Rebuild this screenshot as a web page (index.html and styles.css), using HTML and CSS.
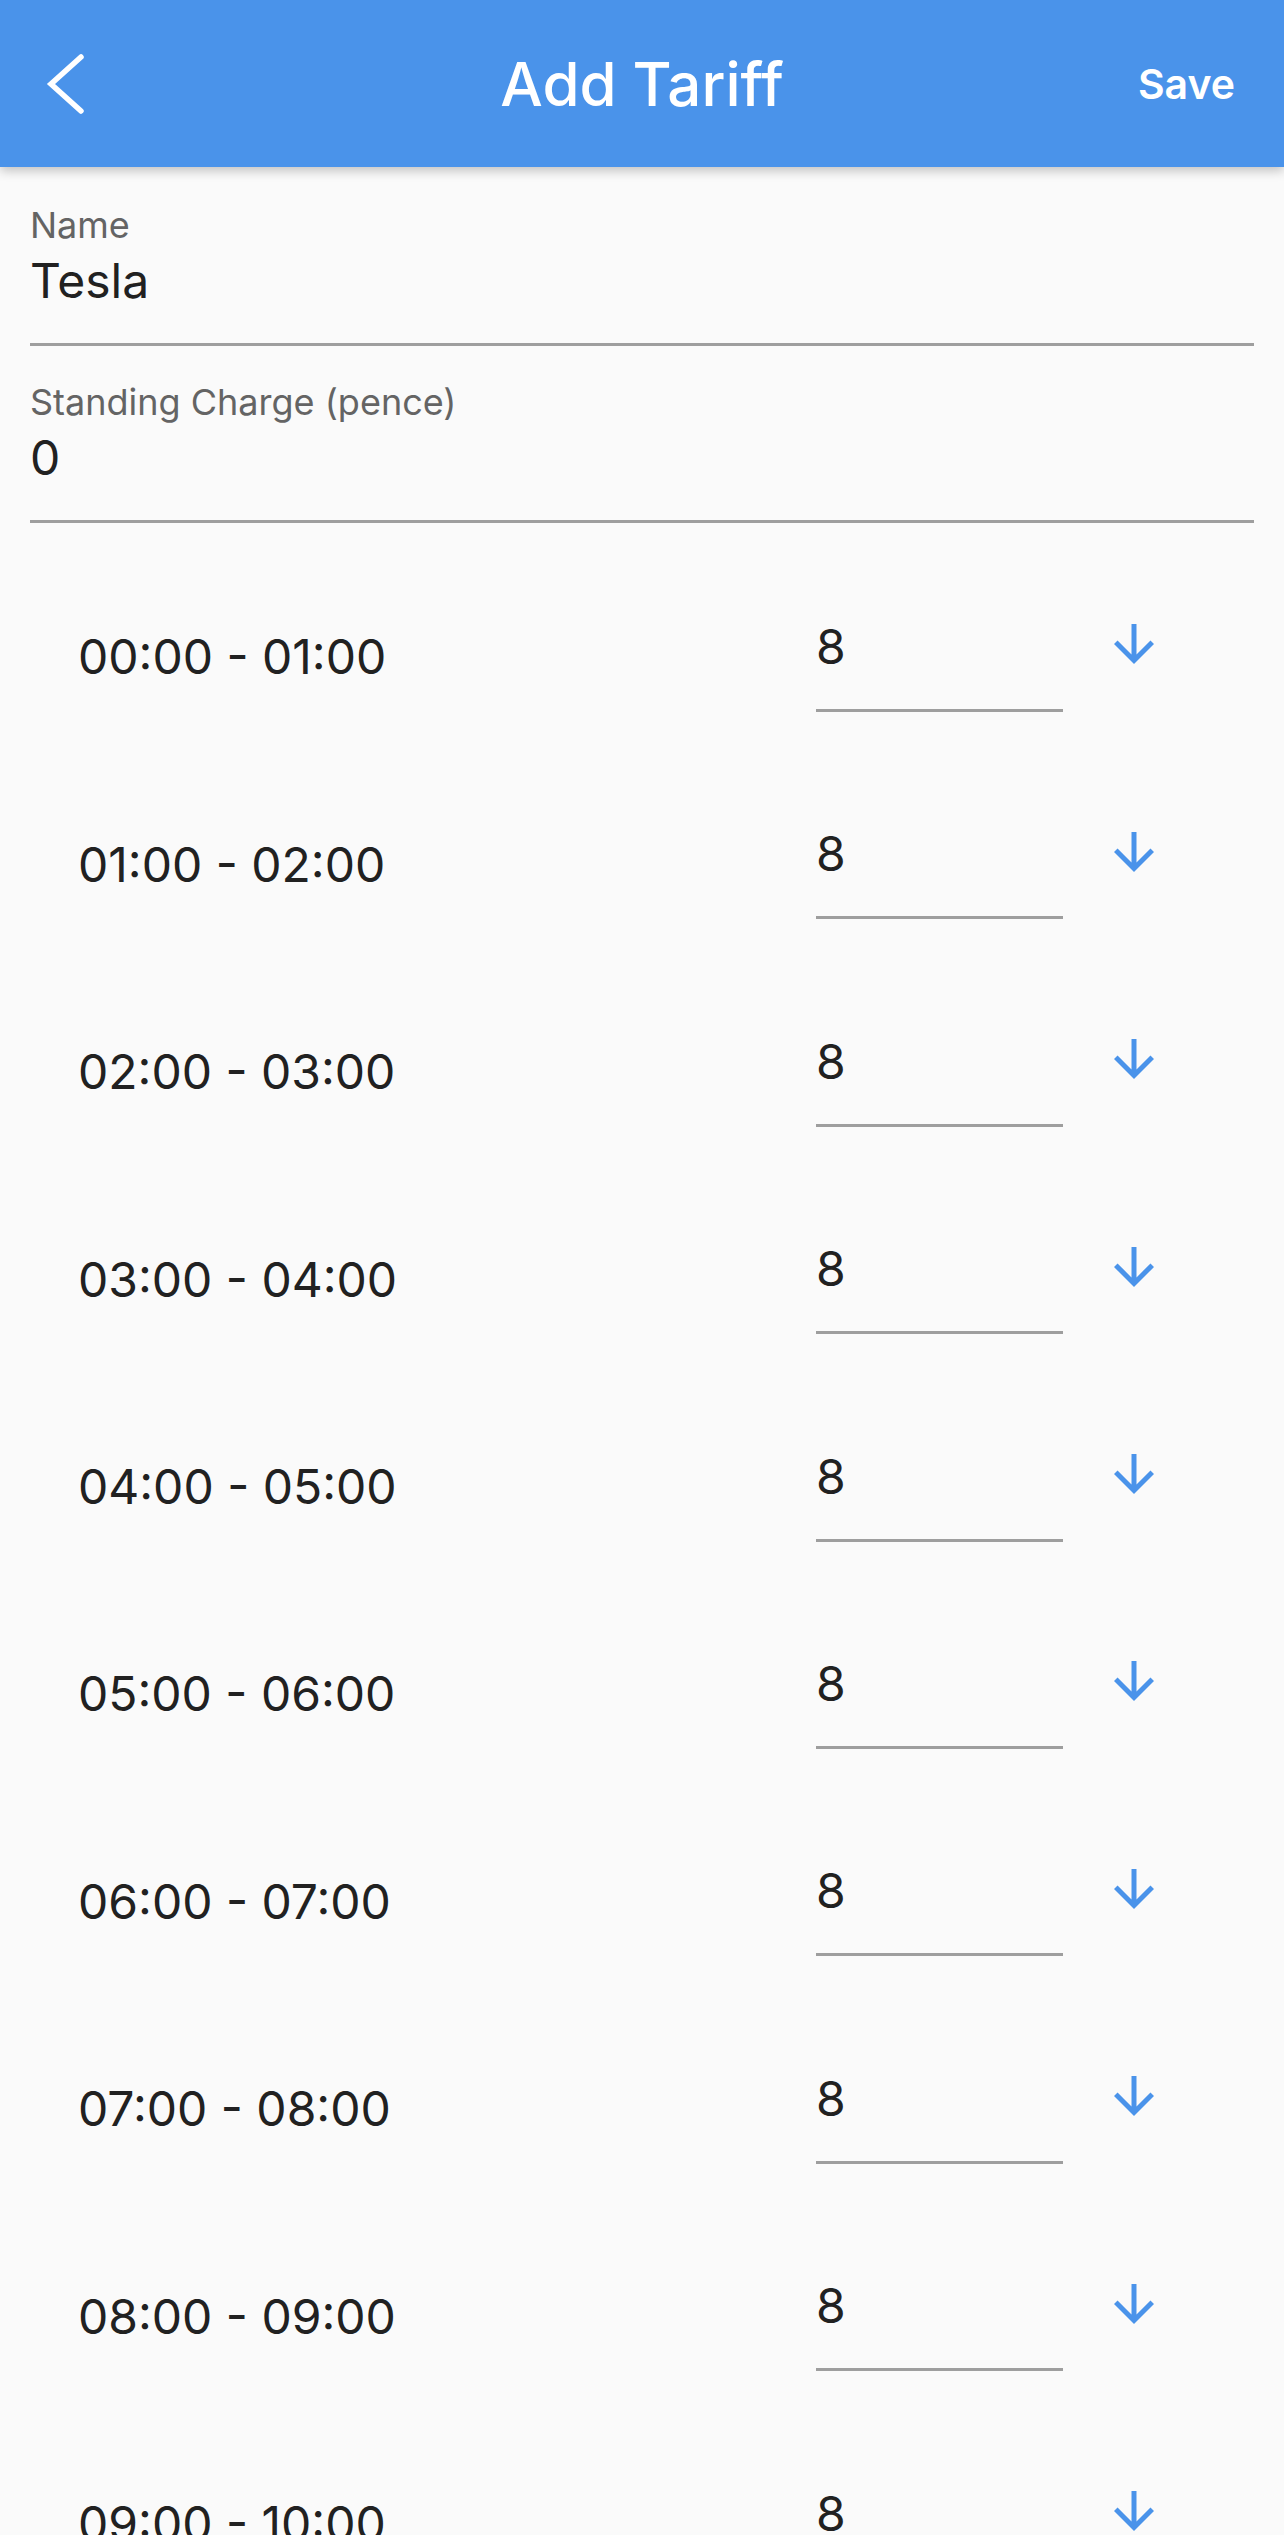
FILE: index.html
```html
<!DOCTYPE html>
<html lang="en">
<head>
  <meta charset="UTF-8" />
  <title>Add Tariff</title>
  <link rel="stylesheet" href="styles.css">
</head>
<body>
  <div class="screen">
    <header class="app-bar">
      <button class="back" aria-label="Back">
        <svg width="50" height="68" viewBox="0 0 50 68">
          <polyline points="41,7 11,34 41,61" fill="none" stroke="#fff" stroke-width="5.5" stroke-linecap="round" stroke-linejoin="miter" />
        </svg>
      </button>
      <h1 class="title">Add Tariff</h1>
      <button class="save">Save</button>
    </header>

    <form class="form">
      <div class="field">
        <label for="name">Name</label>
        <input id="name" type="text" value="Tesla" />
      </div>
      <div class="field">
        <label for="standing">Standing Charge (pence)</label>
        <input id="standing" type="text" value="0" />
      </div>
    </form>

    <div class="rates">
      <div class="rate-row">
        <span class="period">00:00 - 01:00</span>
        <input class="rate" type="text" value="8" />
        <svg class="fill-down" viewBox="0 0 24 24"><path d="M20 12l-1.41-1.41L13 16.17V4h-2v12.17l-5.58-5.59L4 12l8 8 8-8z" /></svg>
      </div>
      <div class="rate-row">
        <span class="period">01:00 - 02:00</span>
        <input class="rate" type="text" value="8" />
        <svg class="fill-down" viewBox="0 0 24 24"><path d="M20 12l-1.41-1.41L13 16.17V4h-2v12.17l-5.58-5.59L4 12l8 8 8-8z" /></svg>
      </div>
      <div class="rate-row">
        <span class="period">02:00 - 03:00</span>
        <input class="rate" type="text" value="8" />
        <svg class="fill-down" viewBox="0 0 24 24"><path d="M20 12l-1.41-1.41L13 16.17V4h-2v12.17l-5.58-5.59L4 12l8 8 8-8z" /></svg>
      </div>
      <div class="rate-row">
        <span class="period">03:00 - 04:00</span>
        <input class="rate" type="text" value="8" />
        <svg class="fill-down" viewBox="0 0 24 24"><path d="M20 12l-1.41-1.41L13 16.17V4h-2v12.17l-5.58-5.59L4 12l8 8 8-8z" /></svg>
      </div>
      <div class="rate-row">
        <span class="period">04:00 - 05:00</span>
        <input class="rate" type="text" value="8" />
        <svg class="fill-down" viewBox="0 0 24 24"><path d="M20 12l-1.41-1.41L13 16.17V4h-2v12.17l-5.58-5.59L4 12l8 8 8-8z" /></svg>
      </div>
      <div class="rate-row">
        <span class="period">05:00 - 06:00</span>
        <input class="rate" type="text" value="8" />
        <svg class="fill-down" viewBox="0 0 24 24"><path d="M20 12l-1.41-1.41L13 16.17V4h-2v12.17l-5.58-5.59L4 12l8 8 8-8z" /></svg>
      </div>
      <div class="rate-row">
        <span class="period">06:00 - 07:00</span>
        <input class="rate" type="text" value="8" />
        <svg class="fill-down" viewBox="0 0 24 24"><path d="M20 12l-1.41-1.41L13 16.17V4h-2v12.17l-5.58-5.59L4 12l8 8 8-8z" /></svg>
      </div>
      <div class="rate-row">
        <span class="period">07:00 - 08:00</span>
        <input class="rate" type="text" value="8" />
        <svg class="fill-down" viewBox="0 0 24 24"><path d="M20 12l-1.41-1.41L13 16.17V4h-2v12.17l-5.58-5.59L4 12l8 8 8-8z" /></svg>
      </div>
      <div class="rate-row">
        <span class="period">08:00 - 09:00</span>
        <input class="rate" type="text" value="8" />
        <svg class="fill-down" viewBox="0 0 24 24"><path d="M20 12l-1.41-1.41L13 16.17V4h-2v12.17l-5.58-5.59L4 12l8 8 8-8z" /></svg>
      </div>
      <div class="rate-row">
        <span class="period">09:00 - 10:00</span>
        <input class="rate" type="text" value="8" />
        <svg class="fill-down" viewBox="0 0 24 24"><path d="M20 12l-1.41-1.41L13 16.17V4h-2v12.17l-5.58-5.59L4 12l8 8 8-8z" /></svg>
      </div>
    </div>
  </div>
</body>
</html>
```

FILE: styles.css
```css
* {
  box-sizing: border-box;
}

body {
  margin: 0;
  font-family: Inter, "Noto Sans", sans-serif;
  background-color: #fafafa;
  color: #212121;
}

.screen {
  height: 100vh;
  overflow: hidden;
}

.app-bar {
  position: relative;
  z-index: 1;
  display: grid;
  grid-template-columns: 1fr auto 1fr;
  align-items: center;
  height: 167px;
  background-color: #4a93ea;
  box-shadow: 0 4px 10px rgba(0, 0, 0, 0.22);
}

.app-bar button {
  background: none;
  border: none;
  padding: 0;
  color: #fff;
  font-family: inherit;
  cursor: pointer;
}

.back {
  justify-self: start;
  margin-left: 40px;
  display: flex;
}

.title {
  margin: 0;
  color: #fff;
  font-size: 60px;
  font-weight: 500;
  line-height: 72px;
}

.save {
  justify-self: end;
  margin-right: 49px;
  font-size: 41px;
  font-weight: 600;
  line-height: 50px;
}

.form {
  margin: 0;
  padding: 2px 30px 0;
}

.field {
  display: flex;
  flex-direction: column;
  padding-top: 35px;
  border-bottom: 3px solid #9e9e9e;
}

.field label {
  font-size: 36px;
  line-height: 43px;
  color: #646464;
  margin-bottom: 4px;
}

.field input,
.rate {
  font-family: inherit;
  font-size: 48px;
  color: #212121;
  background: transparent;
  border: none;
  outline: none;
  padding: 0;
  height: 58px;
}

.field input {
  margin-bottom: 34px;
}

.rates {
  padding-top: 30.8px;
}

.rate-row {
  display: flex;
  align-items: center;
  height: 207.4px;
  padding-left: 78px;
}

.period {
  width: 738px;
  font-size: 48px;
  line-height: 58px;
}

.rate {
  width: 247px;
  height: 109px;
  padding-top: 14.5px;
  padding-bottom: 33.5px;
  border-bottom: 3px solid #9e9e9e;
  box-sizing: border-box;
}

.fill-down {
  width: 60px;
  height: 60px;
  margin-left: 40.5px;
  margin-bottom: 26px;
  fill: #4a93ea;
}
```
